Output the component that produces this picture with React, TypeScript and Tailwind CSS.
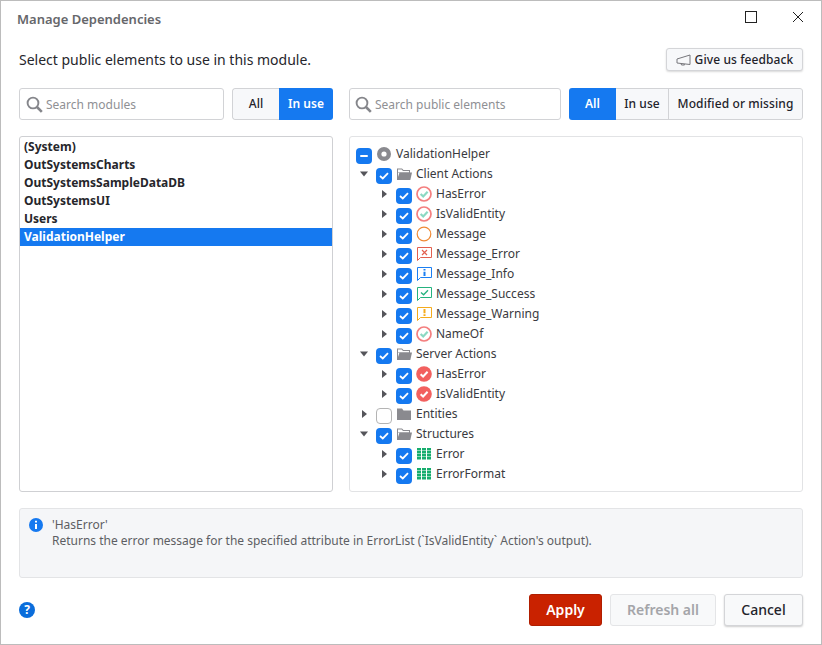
const font = "font-['Noto_Sans',sans-serif]";

type IconKind =
  | "module"
  | "folderOpen"
  | "folder"
  | "client"
  | "ring"
  | "msgError"
  | "msgInfo"
  | "msgSuccess"
  | "msgWarning"
  | "server"
  | "grid";

type Row = {
  label: string;
  level: number;
  icon: IconKind;
  arrow?: "open" | "closed";
  check: "on" | "off" | "mixed";
};

const rows: Row[] = [
  { label: "ValidationHelper", level: 0, icon: "module", check: "mixed" },
  { label: "Client Actions", level: 1, icon: "folderOpen", arrow: "open", check: "on" },
  { label: "HasError", level: 2, icon: "client", arrow: "closed", check: "on" },
  { label: "IsValidEntity", level: 2, icon: "client", arrow: "closed", check: "on" },
  { label: "Message", level: 2, icon: "ring", arrow: "closed", check: "on" },
  { label: "Message_Error", level: 2, icon: "msgError", arrow: "closed", check: "on" },
  { label: "Message_Info", level: 2, icon: "msgInfo", arrow: "closed", check: "on" },
  { label: "Message_Success", level: 2, icon: "msgSuccess", arrow: "closed", check: "on" },
  { label: "Message_Warning", level: 2, icon: "msgWarning", arrow: "closed", check: "on" },
  { label: "NameOf", level: 2, icon: "client", arrow: "closed", check: "on" },
  { label: "Server Actions", level: 1, icon: "folderOpen", arrow: "open", check: "on" },
  { label: "HasError", level: 2, icon: "server", arrow: "closed", check: "on" },
  { label: "IsValidEntity", level: 2, icon: "server", arrow: "closed", check: "on" },
  { label: "Entities", level: 1, icon: "folder", arrow: "closed", check: "off" },
  { label: "Structures", level: 1, icon: "folderOpen", arrow: "open", check: "on" },
  { label: "Error", level: 2, icon: "grid", arrow: "closed", check: "on" },
  { label: "ErrorFormat", level: 2, icon: "grid", arrow: "closed", check: "on" },
];

const modules = ["(System)", "OutSystemsCharts", "OutSystemsSampleDataDB", "OutSystemsUI", "Users", "ValidationHelper"];

function Bubble({ color, children }: { color: string; children: React.ReactNode }) {
  return (
    <svg width="16" height="16" viewBox="0 0 16 16" fill="none">
      <path d="M1.5 1.5H15.5V11.5H4.5L1.5 14.5Z" stroke={color} strokeWidth="1" fill="#fff" />
      {children}
    </svg>
  );
}

function TreeIcon({ kind }: { kind: IconKind }) {
  switch (kind) {
    case "module":
      return (
        <svg width="16" height="16" viewBox="0 0 16 16">
          <circle cx="8" cy="8" r="7" fill="#8a8a8f" />
          <circle cx="8" cy="8" r="2.6" fill="#fff" />
        </svg>
      );
    case "folderOpen":
      return (
        <svg width="16" height="16" viewBox="0 0 16 16">
          <path d="M1 2.5H6L7.5 4H14V7H2V14H1Z" fill="#8a8a8f" />
          <path d="M2 3.5H5.6L7 5H13V6.5H2Z" fill="#fff" />
          <path d="M3.5 6.5H16L14.3 14H1Z" fill="#8a8a8f" />
        </svg>
      );
    case "folder":
      return (
        <svg width="16" height="16" viewBox="0 0 16 16">
          <path d="M1 2.5H6L7.5 4.5H15V14H1Z" fill="#8a8a8f" />
        </svg>
      );
    case "client":
      return (
        <svg width="16" height="16" viewBox="0 0 16 16" fill="none">
          <circle cx="8" cy="8" r="7" stroke="#f47f7f" strokeWidth="1.7" fill="#fff" />
          <path d="M4.6 8L7.2 10.4L11.6 5.7" stroke="#8cd9c3" strokeWidth="2.2" />
        </svg>
      );
    case "server":
      return (
        <svg width="16" height="16" viewBox="0 0 16 16" fill="none">
          <circle cx="8" cy="8" r="7.8" fill="#f2605f" />
          <path d="M4.6 8.2L7.1 10.5L11.6 5.8" stroke="#fff" strokeWidth="2" />
        </svg>
      );
    case "ring":
      return (
        <svg width="16" height="16" viewBox="0 0 16 16" fill="none">
          <circle cx="8" cy="8" r="6.8" stroke="#f08a35" strokeWidth="1.2" fill="#fff" />
        </svg>
      );
    case "msgError":
      return (
        <Bubble color="#e2604f">
          <path d="M6 4L11 9M11 4L6 9" stroke="#e2604f" strokeWidth="1.2" />
        </Bubble>
      );
    case "msgInfo":
      return (
        <Bubble color="#1b7ff2">
          <path d="M8.5 3V4.6M8.5 5.8V10" stroke="#1b7ff2" strokeWidth="2" />
        </Bubble>
      );
    case "msgSuccess":
      return (
        <Bubble color="#25b27f">
          <path d="M5 6.5L7.6 8.8L12 4.2" stroke="#25b27f" strokeWidth="1.3" />
        </Bubble>
      );
    case "msgWarning":
      return (
        <Bubble color="#f5ab1c">
          <path d="M8.5 3V7.2M8.5 8.2V10" stroke="#f5ab1c" strokeWidth="2" />
        </Bubble>
      );
    case "grid":
      return (
        <svg width="16" height="16" viewBox="0 0 16 16">
          <path
            d="M1 2H5V4.4H1ZM6 2H10V4.4H6ZM11 2H15V4.4H11ZM1 5H5V7.4H1ZM6 5H10V7.4H6ZM11 5H15V7.4H11ZM1 8H5V10.4H1ZM6 8H10V10.4H6ZM11 8H15V10.4H11ZM1 11H5V13.6H1ZM6 11H10V13.6H6ZM11 11H15V13.6H11Z"
            fill="#17ad6e"
          />
        </svg>
      );
  }
}

function Check({ state }: { state: Row["check"] }) {
  if (state === "off") {
    return <span className="w-4 h-4 rounded-[4px] border border-[#b4b4b4] bg-white shrink-0" />;
  }
  return (
    <span className="w-4 h-4 rounded-[4px] bg-[#1579f0] flex items-center justify-center shrink-0">
      {state === "on" ? (
        <svg width="10" height="8" viewBox="0 0 10 8" fill="none">
          <path d="M1 4L3.8 6.5L9 1.2" stroke="#fff" strokeWidth="1.8" />
        </svg>
      ) : (
        <span className="w-2 h-[2px] rounded-sm bg-white" />
      )}
    </span>
  );
}

function Arrow({ dir }: { dir?: Row["arrow"] }) {
  if (!dir) return null;
  return dir === "open" ? (
    <svg width="8" height="6" viewBox="0 0 8 6">
      <path d="M0 0.5H8L4 5.5Z" fill="#55555a" />
    </svg>
  ) : (
    <svg width="5" height="8" viewBox="0 0 5 8">
      <path d="M0 0L5 4L0 8Z" fill="#55555a" />
    </svg>
  );
}

function TreeRow({ row }: { row: Row }) {
  return (
    <div className={`flex items-center h-5 ${row.level === 2 ? "pl-5" : "pl-0"}`}>
      {row.level > 0 && (
        <span className="w-5 flex justify-center items-center pr-[4px]">
          <Arrow dir={row.arrow} />
        </span>
      )}
      <span className="self-start mt-[4px] flex">
        <Check state={row.check} />
      </span>
      <span className="ml-[4px] w-4 flex">
        <TreeIcon kind={row.icon} />
      </span>
      <span className="ml-[4px] text-[12px] text-[#3a3a40] leading-none">{row.label}</span>
    </div>
  );
}

function SearchBox({ placeholder, className }: { placeholder: string; className: string }) {
  return (
    <div className={`${className} h-8 border border-[#d2d3d6] rounded-[3px] bg-white flex items-center gap-[3px]`}>
      <svg width="17" height="17" viewBox="0 0 17 17" fill="none" className="shrink-0">
        <circle cx="7" cy="7" r="5.4" stroke="#85868b" strokeWidth="1.9" />
        <path d="M11 11L15.8 15.8" stroke="#85868b" strokeWidth="2.6" />
      </svg>
      <span className="text-[12px] text-[#8f9094] pt-[2px]">{placeholder}</span>
    </div>
  );
}

export default function App() {
  return (
    <div className={`${font} w-[822px] h-[645px] border border-[#bcbcbc] bg-white flex flex-col px-[18px] overflow-hidden`}>
      <div className="h-[37px] flex items-center shrink-0">
        <span className="-ml-[2px] text-[13px] font-semibold text-[#66676b]">Manage Dependencies</span>
        <div className="ml-auto -mt-[5px] -mr-[1px] flex items-center gap-[35px]">
          <span className="w-3 h-3 border border-[#222]" />
          <svg width="12" height="12" viewBox="0 0 12 12" fill="none">
            <path d="M1 1L11 11M11 1L1 11" stroke="#222" strokeWidth="1" />
          </svg>
        </div>
      </div>

      <div className="mt-[10px] h-[23px] flex items-center justify-between shrink-0">
        <span className="text-[14px] text-[#26262b]">Select public elements to use in this module.</span>
        <button className="h-[23px] w-[137px] rounded-[3px] border border-[#d4d5d8] bg-[#f7f8fa] shadow-[0_1px_2px_rgba(0,0,0,0.15)] flex items-center justify-center gap-[4px] text-[12px] font-medium tracking-[0.1px] text-[#23232a]">
          <svg width="15" height="12" viewBox="0 0 15 12" fill="none">
            <path d="M14 1V10.5L1 9V5L14 1ZM5 9.5L5.5 11H8.5L8 10" stroke="#77777c" strokeWidth="1" />
          </svg>
          Give us feedback
        </button>
      </div>

      <div className="mt-[17px] flex gap-4 h-8 shrink-0">
        <div className="w-[314px] flex gap-2">
          <SearchBox placeholder="Search modules" className="w-[205px] pl-[6px]" />
          <div className="w-[101px] flex text-[12px] font-medium rounded-[3px] overflow-hidden">
            <span className="w-[47px] border border-r-0 border-[#d2d3d6] rounded-l-[3px] bg-[#f7f8fa] flex items-center justify-center text-[#23232a]">All</span>
            <span className="flex-1 bg-[#1579f0] flex items-center justify-center font-semibold text-white">In use</span>
          </div>
        </div>
        <div className="w-[454px] flex gap-2">
          <SearchBox placeholder="Search public elements" className="w-[212px] pl-[5px]" />
          <div className="w-[234px] flex text-[12px] font-medium tracking-[0.1px] rounded-[3px] overflow-hidden">
            <span className="w-[47px] bg-[#1579f0] flex items-center justify-center font-semibold text-white">All</span>
            <span className="w-[53px] border-y border-r border-[#d2d3d6] bg-[#f7f8fa] flex items-center justify-center text-[#23232a]">In use</span>
            <span className="flex-1 border-y border-r border-[#d2d3d6] rounded-r-[3px] bg-[#f7f8fa] flex items-center justify-center text-[#23232a]">Modified or missing</span>
          </div>
        </div>
      </div>

      <div className="mt-4 flex gap-4 h-[356px] shrink-0">
        <div className="w-[314px] border border-[#cfd0d3] rounded-[3px] pt-[1px]">
          {modules.map((m) => (
            <div
              key={m}
              className={`h-[18px] pl-[4px] flex items-center text-[12px] font-bold ${m === "ValidationHelper" ? "bg-[#1579f0] text-white" : "text-[#26262b]"}`}
            >
              {m}
            </div>
          ))}
        </div>
        <div className="w-[454px] border border-[#e2e3e5] rounded-[3px] pt-[7px] pl-[6px]">
          {rows.map((r, i) => (
            <TreeRow key={i} row={r} />
          ))}
        </div>
      </div>

      <div className="mt-4 h-[70px] shrink-0 border border-[#e3e4e6] rounded-[3px] bg-[#f5f6f8] flex pt-[8px] pl-[9px] gap-[9px]">
        <svg width="14" height="14" viewBox="0 0 14 14" className="mt-[1px] shrink-0">
          <circle cx="7" cy="7" r="7" fill="#1579f0" />
          <path d="M7 2.8V4.6M7 6V11" stroke="#fff" strokeWidth="2" />
        </svg>
        <p className="text-[12px] leading-4 text-[#5d5e63]">
          'HasError'
          <br />
          Returns the error message for the specified attribute in ErrorList (`IsValidEntity` Action's output).
        </p>
      </div>

      <div className="mt-4 h-8 flex items-center shrink-0">
        <span className="w-4 h-4 rounded-full bg-[#0a6ddb] flex items-center justify-center text-white text-[12px] font-bold leading-none">?</span>
        <div className="ml-auto flex gap-2">
          <button className="w-[73px] h-8 pb-[2px] rounded-[3px] bg-[#c92200] border border-[#b01e00] text-white text-[14px] font-semibold">Apply</button>
          <button className="w-[106px] h-8 pb-[2px] rounded-[3px] bg-[#f8f9fa] border border-[#e4e5e7] text-[#a4a5a9] text-[14px] font-semibold">Refresh all</button>
          <button className="w-[79px] h-8 pb-[2px] rounded-[3px] bg-[#f8f9fa] border border-[#d4d5d8] shadow-[0_1px_2px_rgba(0,0,0,0.2)] text-[#23232a] text-[14px] font-medium">Cancel</button>
        </div>
      </div>
    </div>
  );
}
